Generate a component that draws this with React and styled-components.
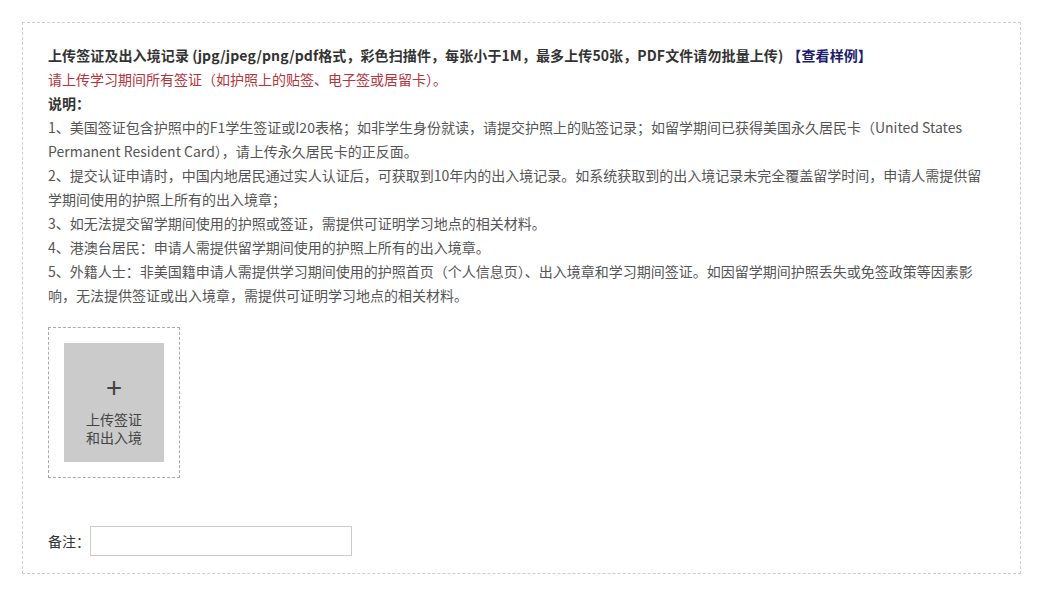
import React from "react";
import styled, { createGlobalStyle } from "styled-components";

const Global = createGlobalStyle`
  html, body { margin: 0; padding: 0; background: #fff; }
  body { font-family: "Noto Sans CJK SC", "Noto Sans", sans-serif; }
`;

const Page = styled.div`
  padding: 22px 29px 0 22px;
`;

const Panel = styled.section`
  border: 1px dashed #cfcfcf;
  padding: 20px 36px 17px 25px;
  color: #555;
  font-size: 14px;
  line-height: 24px;
`;

const Title = styled.div`
  font-weight: bold;
  color: #333;
  letter-spacing: 0.1px;
`;

const Link = styled.a`
  color: #1c1c6e;
  text-decoration: none;
  margin-left: 4px;
`;

const Warn = styled.div`
  color: #b5343c;
`;

const Label = styled.div`
  font-weight: bold;
  color: #333;
`;

const Item = styled.p`
  margin: 0;
`;

const UploadFrame = styled.div`
  margin-top: 20px;
  width: 100px;
  height: 119px;
  padding: 15px;
  border: 1px dashed #aaa;
`;

const UploadTile = styled.button`
  width: 100px;
  height: 119px;
  border: none;
  background: #cbcbcb;
  color: #444;
  font-family: inherit;
  font-size: 14px;
  line-height: 18px;
  display: flex;
  flex-direction: column;
  align-items: center;
  justify-content: center;
  padding: 12px 0 0;
  box-sizing: border-box;
  cursor: pointer;
`;

const Plus = styled.span`
  font-size: 28px;
  line-height: 28px;
  color: #444;
  font-weight: 400;
  margin-bottom: 10px;
`;

const NoteRow = styled.div`
  margin-top: 48px;
  display: flex;
  align-items: center;
  color: #333;
`;

const NoteInput = styled.input`
  width: 262px;
  height: 30px;
  box-sizing: border-box;
  border: 1px solid #ccc;
  outline: none;
`;

const items = [
  "1、美国签证包含护照中的F1学生签证或I20表格；如非学生身份就读，请提交护照上的贴签记录；如留学期间已获得美国永久居民卡（United States Permanent Resident Card），请上传永久居民卡的正反面。",
  "2、提交认证申请时，中国内地居民通过实人认证后，可获取到10年内的出入境记录。如系统获取到的出入境记录未完全覆盖留学时间，申请人需提供留学期间使用的护照上所有的出入境章；",
  "3、如无法提交留学期间使用的护照或签证，需提供可证明学习地点的相关材料。",
  "4、港澳台居民：申请人需提供留学期间使用的护照上所有的出入境章。",
  "5、外籍人士：非美国籍申请人需提供学习期间使用的护照首页（个人信息页）、出入境章和学习期间签证。如因留学期间护照丢失或免签政策等因素影响，无法提供签证或出入境章，需提供可证明学习地点的相关材料。",
];

export default function App() {
  return (
    <>
      <Global />
      <Page>
        <Panel>
          <Title>
            上传签证及出入境记录 (jpg/jpeg/png/pdf格式，彩色扫描件，每张小于1M，最多上传50张，PDF文件请勿批量上传)
            <Link href="#">【查看样例】</Link>
          </Title>
          <Warn>请上传学习期间所有签证（如护照上的贴签、电子签或居留卡）。</Warn>
          <Label>说明：</Label>
          {items.map((t) => (
            <Item key={t}>{t}</Item>
          ))}
          <UploadFrame>
            <UploadTile>
              <Plus>+</Plus>
              上传签证
              <br />
              和出入境
            </UploadTile>
          </UploadFrame>
          <NoteRow>
            备注：
            <NoteInput type="text" />
          </NoteRow>
        </Panel>
      </Page>
    </>
  );
}
